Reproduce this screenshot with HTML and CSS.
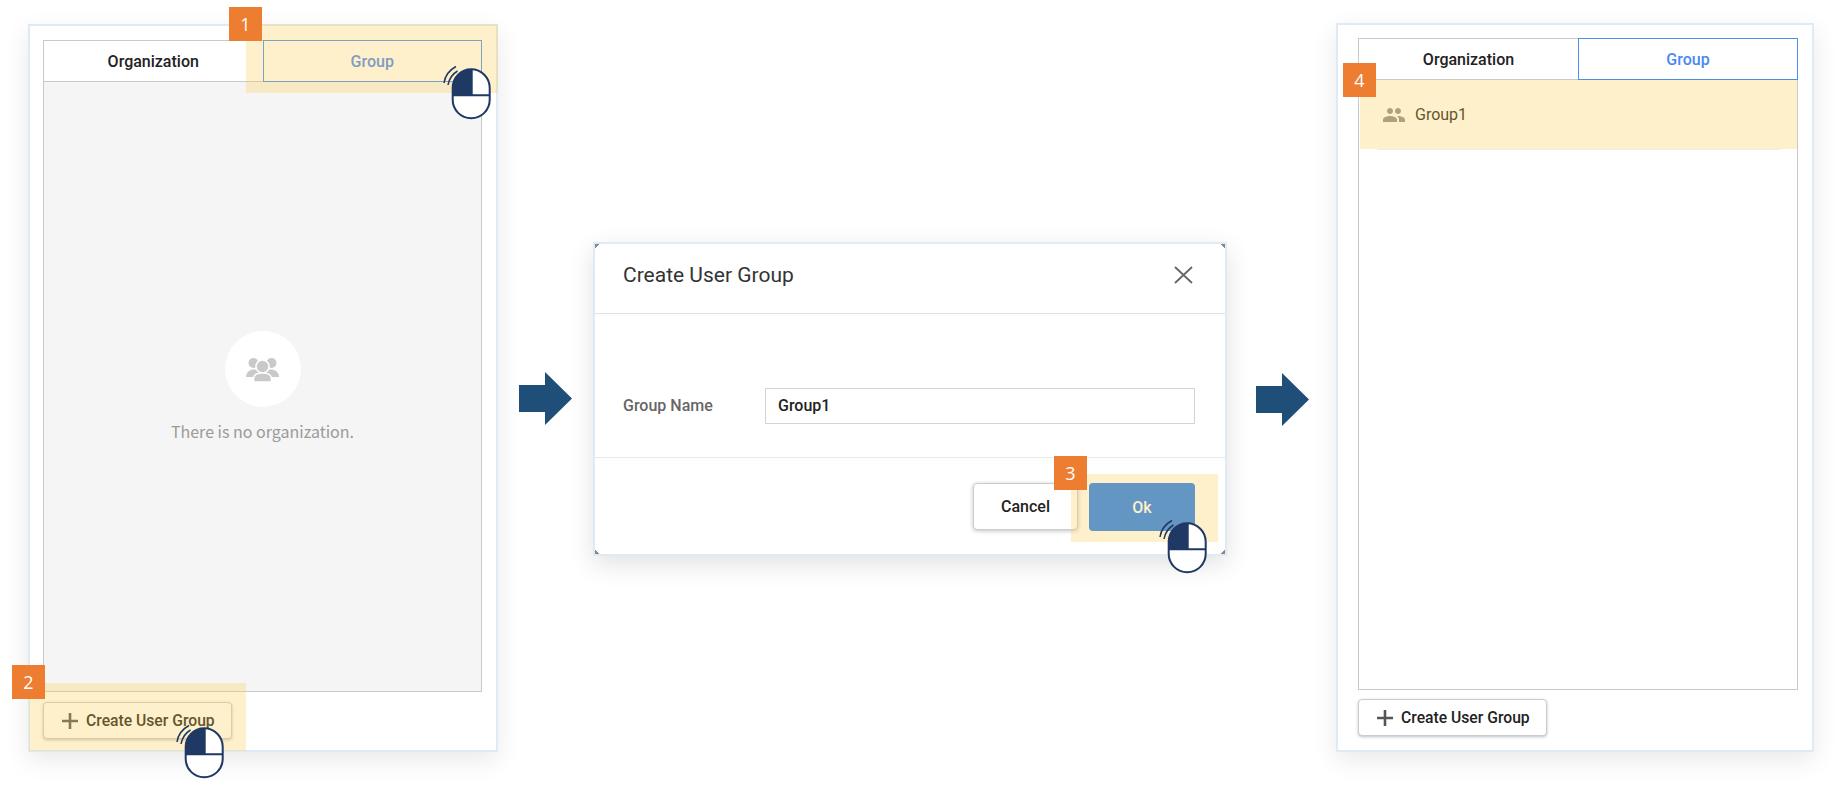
FILE: index.html
```html
<!DOCTYPE html>
<html lang="en">
<head>
    <meta charset="UTF-8">
    <title>Create User Group</title>
    <link rel="stylesheet" href="styles.css">
</head>
<body>
    <svg class="defs" width="0" height="0">
        <symbol id="mouse" viewBox="0 0 48 56">
            <rect x="9.700" y="4.300" width="37" height="49" rx="18.500" fill="#fff" stroke="#1f3864" stroke-width="2"/>
            <path d="M28.700 4.300A19 18.500 0 0 0 9.700 22.800V30.300H28.700Z" fill="#1f3864"/>
            <path d="M9.700 30.300H46.700M28.700 4.300V30.300" fill="none" stroke="#1f3864" stroke-width="2"/>
            <path d="M1 18C2 11 6.500 5 13 1.500M5 20C6 14 9.500 9 14.500 6" fill="none" stroke="#1f3864" stroke-width="1.500"/>
        </symbol>
        <symbol id="plus" viewBox="0 0 16 16">
            <path d="M8 0V16M0 8H16" fill="none" stroke="currentColor" stroke-width="2.600"/>
        </symbol>
        <symbol id="arrow" viewBox="0 0 53 53" preserveAspectRatio="none">
            <path d="M0 13H26V0L53 26.500L26 53V40H0Z" fill="#1f4e79"/>
        </symbol>
    </svg>

    <main class="flow">
        <section class="panel panel-first">
            <div class="box">
                <div class="tabs">
                    <div class="tab">Organization</div>
                    <div class="tab tab-active">Group</div>
                </div>
                <div class="empty">
                    <div class="empty-circle">
                        <svg width="33" height="25" viewBox="0 0 33 25">
                            <circle cx="7.500" cy="6" r="5" fill="#c9c9c9"/>
                            <circle cx="25.500" cy="6" r="5" fill="#c9c9c9"/>
                            <path d="M0 20C0 15 4 12.500 8 12.500S15 15 15 20Z" fill="#c9c9c9"/>
                            <path d="M18 20C18 15 21 12.500 25 12.500S33 15 33 20Z" fill="#c9c9c9"/>
                            <circle cx="16.500" cy="9.500" r="6.500" fill="#c9c9c9" stroke="#fff" stroke-width="1.500"/>
                            <path d="M7.500 25V22C7.500 18 11 16 16.500 16S25.500 18 25.500 22V25Z" fill="#c9c9c9" stroke="#fff" stroke-width="1.500"/>
                        </svg>
                    </div>
                    <p class="empty-text">There is no organization.</p>
                </div>
            </div>
            <button class="add-btn" type="button">
                <svg class="plus" width="16" height="16"><use href="#plus"/></svg>
                Create User Group
            </button>
            <div class="mark mark-1"></div>
            <div class="mark mark-2"></div>
            <div class="badge badge-1">1</div>
            <div class="badge badge-2">2</div>
            <svg class="mouse mouse-1" width="48" height="56"><use href="#mouse"/></svg>
            <svg class="mouse mouse-2" width="48" height="56"><use href="#mouse"/></svg>
        </section>

        <svg class="arrow arrow-first" width="53" height="53"><use href="#arrow"/></svg>

        <section class="modal">
            <header class="modal-head">
                <h2 class="modal-title">Create User Group</h2>
                <svg class="close" width="19" height="18" viewBox="0 0 19 18">
                    <path d="M1 1L18 17M18 1L1 17" fill="none" stroke="#666" stroke-width="1.800"/>
                </svg>
            </header>
            <div class="modal-body">
                <label class="field-label">Group Name</label>
                <div class="field-input">Group1</div>
            </div>
            <footer class="modal-foot">
                <button class="btn" type="button">Cancel</button>
                <button class="btn btn-ok" type="button">Ok</button>
            </footer>
            <div class="mark mark-3"></div>
            <div class="badge badge-3">3</div>
            <svg class="mouse mouse-3" width="48" height="56"><use href="#mouse"/></svg>
        </section>

        <svg class="arrow arrow-second" width="53" height="53"><use href="#arrow"/></svg>

        <section class="panel panel-last">
            <div class="box">
                <div class="tabs">
                    <div class="tab">Organization</div>
                    <div class="tab tab-active tab-strong">Group</div>
                </div>
                <ul class="groups">
                    <li class="group-row">
                        <svg class="group-icon" width="24" height="24" viewBox="0 0 24 24">
                            <path d="M16 11c1.660 0 2.990-1.340 2.990-3S17.660 5 16 5c-1.660 0-3 1.340-3 3s1.340 3 3 3zm-8 0c1.660 0 2.990-1.340 2.990-3S9.660 5 8 5C6.340 5 5 6.340 5 8s1.340 3 3 3zm0 2c-2.330 0-7 1.170-7 3.500V19h14v-2.500c0-2.330-4.670-3.500-7-3.500zm8 0c-.290 0-.620.020-.970.050 1.160.840 1.970 1.970 1.970 3.450V19h6v-2.500c0-2.330-4.670-3.500-7-3.500z" fill="#8f8f8f"/>
                        </svg>
                        Group1
                    </li>
                </ul>
            </div>
            <button class="add-btn" type="button">
                <svg class="plus" width="16" height="16"><use href="#plus"/></svg>
                Create User Group
            </button>
            <div class="mark mark-4"></div>
            <div class="badge badge-4">4</div>
        </section>
    </main>
</body>
</html>
```

FILE: styles.css
```css
* {
    box-sizing: border-box;
}
html, body {
    margin: 0;
    height: 787px;
    overflow: hidden;
    background: #fff;
}
body {
    color: #222;
    font-family: Roboto, "Liberation Sans", sans-serif;
}
.defs {
    position: absolute;
}
.flow {
    display: flex;
    align-items: flex-start;
    padding: 23px 0 0 28px;
}

/* panels */
.panel {
    position: relative;
    display: flex;
    flex-direction: column;
    align-items: flex-start;
    border: 2px solid #dfeaf7;
    background: #fff;
    box-shadow: 0 8px 24px rgba(0, 0, 0, .09);
}
.panel-first {
    margin-top: 1px;
    padding: 14px 14px 11px 13px;
    width: 470px;
    height: 728px;
    gap: 10px;
}
.panel-last {
    margin-left: 27px;
    padding: 13px 14px 14px 20px;
    width: 478px;
    height: 729px;
    gap: 9px;
}
.box {
    display: flex;
    flex-direction: column;
    flex: 1;
    width: 100%;
    border: 1px solid #c9c9c9;
    background: #fff;
}

/* tabs */
.tabs {
    display: grid;
    grid-template-columns: 1fr 1fr;
    height: 41px;
    border-bottom: 1px solid #c9c9c9;
}
.tab {
    display: flex;
    align-items: center;
    justify-content: center;
    font-size: 16px;
    font-weight: 500;
    color: #222;
}
.tab-active {
    margin: -1px -1px -1px 0;
    border: 1px solid #4a8ef2;
    color: #4a88f2;
}
.tab-strong {
    border-width: 1.500px;
}

/* empty state */
.empty {
    display: flex;
    flex-direction: column;
    align-items: center;
    justify-content: center;
    flex: 1;
    background: #f5f5f5;
}
.empty-circle {
    display: flex;
    align-items: center;
    justify-content: center;
    width: 76px;
    height: 76px;
    border-radius: 50%;
    background: #fff;
}
.empty-text {
    margin: 13px 0 0;
    color: #9a9a9a;
    font-family: "Noto Sans CJK KR", "Noto Sans", sans-serif;
    font-size: 16px;
    line-height: 22px;
}

/* buttons */
.add-btn {
    display: flex;
    align-items: center;
    gap: 8px;
    padding: 0 0 0 18px;
    width: 189px;
    height: 37px;
    border: 1px solid #ccc;
    border-radius: 4px;
    background: #fff;
    box-shadow: 0 1px 3px rgba(0, 0, 0, .25);
    color: #222;
    font-family: inherit;
    font-size: 15.700px;
    font-weight: 500;
}
.plus {
    color: #555;
}
.btn {
    width: 105px;
    height: 47px;
    border: 1px solid #ccc;
    border-radius: 4px;
    background: #fff;
    box-shadow: 0 1px 4px rgba(0, 0, 0, .25);
    color: #222;
    font-family: inherit;
    font-size: 16px;
    font-weight: 500;
}
.btn-ok {
    width: 106px;
    height: 48px;
    border: 0;
    background: #227ef5;
    box-shadow: none;
    color: #fff;
}

/* arrows */
.arrow-first {
    margin: 349px 0 0 21px;
}
.arrow-second {
    margin: 350px 0 0 29px;
}

/* modal */
.modal {
    position: relative;
    display: flex;
    flex-direction: column;
    margin: 219px 0 0 21px;
    width: 634px;
    height: 314px;
    border: 2px solid #dfeaf7;
    background:
        linear-gradient(135deg, #888 3px, transparent 3px) 0 0 / 6px 6px no-repeat,
        linear-gradient(225deg, #888 3px, transparent 3px) 100% 0 / 6px 6px no-repeat,
        linear-gradient(45deg, #888 3px, transparent 3px) 0 100% / 6px 6px no-repeat,
        linear-gradient(315deg, #888 3px, transparent 3px) 100% 100% / 6px 6px no-repeat,
        #fff;
    box-shadow: 0 8px 24px rgba(0, 0, 0, .12);
}
.modal-head {
    display: flex;
    align-items: center;
    justify-content: space-between;
    padding: 0 32px 8px 28px;
    height: 70px;
    border-bottom: 1px solid #e2e2e2;
}
.modal-title {
    margin: 0;
    font-size: 21px;
    font-weight: 400;
    color: #333;
}
.modal-body {
    display: flex;
    align-items: flex-start;
    padding: 74px 30px 0 28px;
    height: 144px;
    border-bottom: 1px solid #e6e9ee;
}
.field-label {
    width: 142px;
    color: #666;
    font-size: 16px;
    font-weight: 500;
    line-height: 36px;
}
.field-input {
    flex: 1;
    padding: 0 12px;
    height: 36px;
    border: 1px solid #d4d4d4;
    color: #222;
    font-size: 16px;
    font-weight: 500;
    line-height: 34px;
}
.modal-foot {
    display: flex;
    justify-content: flex-end;
    gap: 11px;
    padding: 25px 30px 0 0;
}

/* group list */
.groups {
    flex: 1;
    margin: 0;
    padding: 0;
    list-style: none;
}
.group-row {
    position: relative;
    display: flex;
    align-items: center;
    gap: 9px;
    padding: 0 0 0 23px;
    height: 69px;
    color: #222;
    font-size: 16px;
}
.group-row:after {
    content: '';
    position: absolute;
    left: 18px;
    right: 17px;
    bottom: -1px;
    height: 1px;
    background: #e8edf5;
}

/* tutorial marks over the screens */
.mark {
    position: absolute;
    background: rgba(253, 205, 80, .3);
}
.mark-1 {
    left: 216px;
    top: -2px;
    width: 252px;
    height: 69px;
}
.mark-2 {
    left: -1px;
    top: 657px;
    width: 217px;
    height: 68px;
}
.mark-3 {
    left: 476px;
    top: 230px;
    width: 147px;
    height: 68px;
}
.mark-4 {
    left: 22px;
    top: 55px;
    width: 437px;
    height: 69px;
}
.badge {
    position: absolute;
    display: flex;
    align-items: center;
    justify-content: center;
    width: 33px;
    height: 34px;
    background: #ed7d31;
    color: #fff;
    font-family: "Open Sans", sans-serif;
    font-size: 18px;
}
.badge-1 {
    left: 199px;
    top: -19px;
}
.badge-2 {
    left: -18px;
    top: 639px;
}
.badge-3 {
    left: 459px;
    top: 212px;
}
.badge-4 {
    left: 5px;
    top: 38px;
}
.mouse {
    position: absolute;
}
.mouse-1 {
    left: 413px;
    top: 39px;
}
.mouse-2 {
    left: 146px;
    top: 698px;
}
.mouse-3 {
    left: 564px;
    top: 275px;
}
```
